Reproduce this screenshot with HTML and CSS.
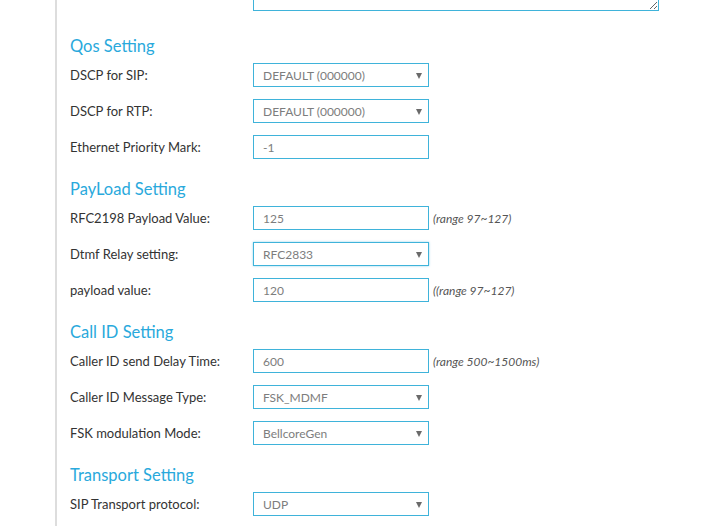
FILE: index.html
```html
<!DOCTYPE html>
<html lang="en">
<head>
<meta charset="utf-8">
<title>SIP Settings</title>
<link rel="stylesheet" href="styles.css">
</head>
<body>
<div class="content">
  <div class="textarea-row">
    <span class="label"></span>
    <textarea class="note"></textarea>
  </div>

  <section class="section">
    <h2 class="section-title">Qos Setting</h2>
    <div class="row">
      <span class="label">DSCP for SIP:</span>
      <div class="select-wrap"><select class="control"><option>DEFAULT (000000)</option></select></div>
    </div>
    <div class="row">
      <span class="label">DSCP for RTP:</span>
      <div class="select-wrap"><select class="control"><option>DEFAULT (000000)</option></select></div>
    </div>
    <div class="row">
      <span class="label">Ethernet Priority Mark:</span>
      <input class="control" type="text" value="-1">
    </div>
  </section>

  <section class="section">
    <h2 class="section-title">PayLoad Setting</h2>
    <div class="row">
      <span class="label">RFC2198 Payload Value:</span>
      <input class="control" type="text" value="125">
      <span class="hint">(range 97~127)</span>
    </div>
    <div class="row">
      <span class="label">Dtmf Relay setting:</span>
      <div class="select-wrap"><select class="control focused"><option>RFC2833</option></select></div>
    </div>
    <div class="row">
      <span class="label">payload value:</span>
      <input class="control" type="text" value="120">
      <span class="hint">((range 97~127)</span>
    </div>
  </section>

  <section class="section">
    <h2 class="section-title">Call ID Setting</h2>
    <div class="row">
      <span class="label">Caller ID send Delay Time:</span>
      <input class="control" type="text" value="600">
      <span class="hint">(range 500~1500ms)</span>
    </div>
    <div class="row">
      <span class="label">Caller ID Message Type:</span>
      <div class="select-wrap"><select class="control"><option>FSK_MDMF</option></select></div>
    </div>
    <div class="row">
      <span class="label">FSK modulation Mode:</span>
      <div class="select-wrap"><select class="control"><option>BellcoreGen</option></select></div>
    </div>
  </section>

  <section class="section">
    <h2 class="section-title">Transport Setting</h2>
    <div class="row">
      <span class="label">SIP Transport protocol:</span>
      <div class="select-wrap"><select class="control"><option>UDP</option></select></div>
    </div>
  </section>
</div>
</body>
</html>
```

FILE: styles.css
```css
html, body {
  margin: 0;
  padding: 0;
  background: #ffffff;
  overflow: hidden;
}

body {
  font-family: Lato, "Open Sans", "Liberation Sans", sans-serif;
  color: #333333;
}

.content {
  margin-left: 55px;
  border-left: 2px solid #dddddd;
  padding-left: 13px;
  min-height: 100vh;
}

.textarea-row {
  display: flex;
  margin-bottom: 11px;
}

.label {
  width: 183px;
  flex: none;
  font-size: 13px;
  color: #333333;
}

.note {
  box-sizing: border-box;
  display: block;
  width: 406px;
  height: 51px;
  margin: -40px 0 0 0;
  border: 1px solid #3fb3da;
  background: #ffffff;
  resize: both;
}

.section {
  padding-top: 13px;
}

.section-title {
  margin: 0;
  font-size: 16.5px;
  line-height: 22px;
  font-weight: normal;
  color: #29a9dc;
}

.row {
  display: flex;
  align-items: center;
  height: 36px;
}

.select-wrap {
  position: relative;
  width: 176px;
  height: 24px;
}

.select-wrap::after {
  content: "";
  position: absolute;
  right: 7px;
  top: 10px;
  border-left: 3.5px solid transparent;
  border-right: 3.5px solid transparent;
  border-top: 6px solid #6a6a6a;
  pointer-events: none;
}

.control {
  box-sizing: border-box;
  width: 176px;
  height: 24px;
  margin: 0;
  padding: 0 9px;
  border: 1px solid #3fb3da;
  border-radius: 0;
  background: #ffffff;
  font-family: Lato, "Open Sans", "Liberation Sans", sans-serif;
  font-size: 12px;
  color: #7d7d7d;
  outline: none;
  -webkit-appearance: none;
  appearance: none;
}

.control.focused {
  box-shadow: 0 0 2px rgba(63, 179, 218, 0.6);
}

.hint {
  margin-left: 4px;
  font-size: 12px;
  font-style: italic;
  color: #555555;
}
```
